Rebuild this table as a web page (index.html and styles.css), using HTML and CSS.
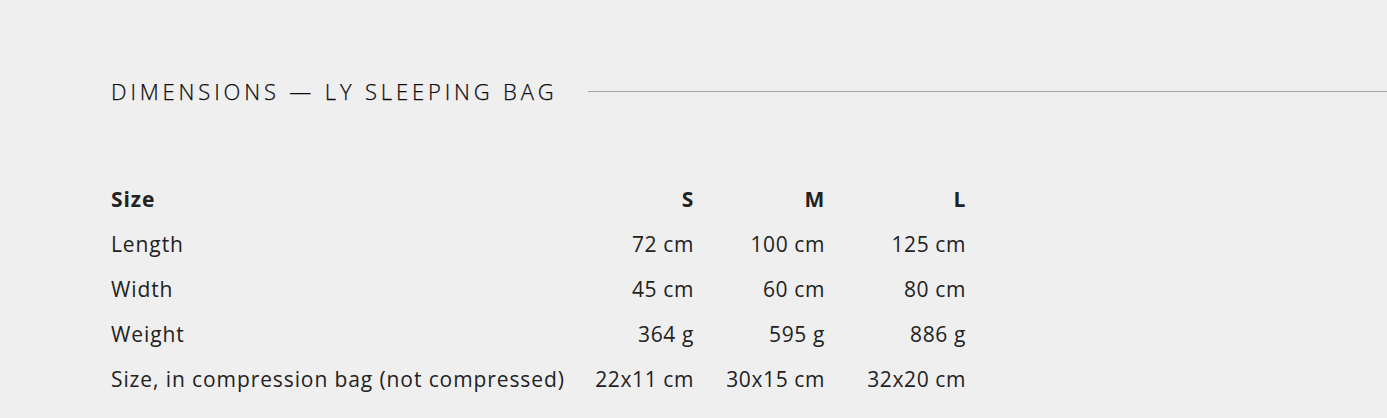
FILE: index.html
```html
<!DOCTYPE html>
<html lang="en">
<head>
<meta charset="utf-8">
<title>Dimensions — LY Sleeping Bag</title>
<link rel="stylesheet" href="styles.css">
</head>
<body>
<section class="dims">
  <header class="dims-head">
    <h2 class="dims-title">Dimensions — LY Sleeping Bag</h2>
    <span class="dims-rule"></span>
  </header>
  <table class="dims-table">
    <thead>
      <tr><th class="lbl">Size</th><th>S</th><th>M</th><th>L</th></tr>
    </thead>
    <tbody>
      <tr><td class="lbl">Length</td><td>72 cm</td><td>100 cm</td><td>125 cm</td></tr>
      <tr><td class="lbl">Width</td><td>45 cm</td><td>60 cm</td><td>80 cm</td></tr>
      <tr><td class="lbl">Weight</td><td>364 g</td><td>595 g</td><td>886 g</td></tr>
      <tr><td class="lbl">Size, in compression bag (not compressed)</td><td>22x11 cm</td><td>30x15 cm</td><td>32x20 cm</td></tr>
    </tbody>
  </table>
</section>
</body>
</html>
```

FILE: styles.css
```css
html, body {
  margin: 0;
  padding: 0;
  background: #efefef;
}
body {
  font-family: "Open Sans", "Lato", sans-serif;
  color: #222;
}
.dims {
  padding: 78px 0 0 111px;
}
.dims-head {
  display: flex;
  align-items: center;
  gap: 30px;
}
.dims-title {
  margin: 0;
  font-size: 22px;
  font-weight: 300;
  letter-spacing: 3.85px;
  text-transform: uppercase;
  line-height: 26px;
  white-space: nowrap;
  color: #0c0c0c;
  -webkit-text-stroke: 0.25px #0c0c0c;
}
.dims-rule {
  flex: 1;
  height: 1px;
  background: #a3a3a3;
}
.dims-table {
  margin-top: 72px;
  border-collapse: collapse;
  font-size: 21px;
}
.dims-table th,
.dims-table td {
  padding: 0;
  height: 45px;
  text-align: right;
  font-weight: 400;
  letter-spacing: 0.6px;
  white-space: nowrap;
}
.dims-table th {
  font-weight: 700;
}
.dims-table .lbl {
  text-align: left;
  width: 455px;
  letter-spacing: 0.9px;
}
.dims-table th:nth-child(2), .dims-table td:nth-child(2) { width: 128px; }
.dims-table th:nth-child(3), .dims-table td:nth-child(3) { width: 131px; }
.dims-table th:nth-child(4), .dims-table td:nth-child(4) { width: 141px; }
```
